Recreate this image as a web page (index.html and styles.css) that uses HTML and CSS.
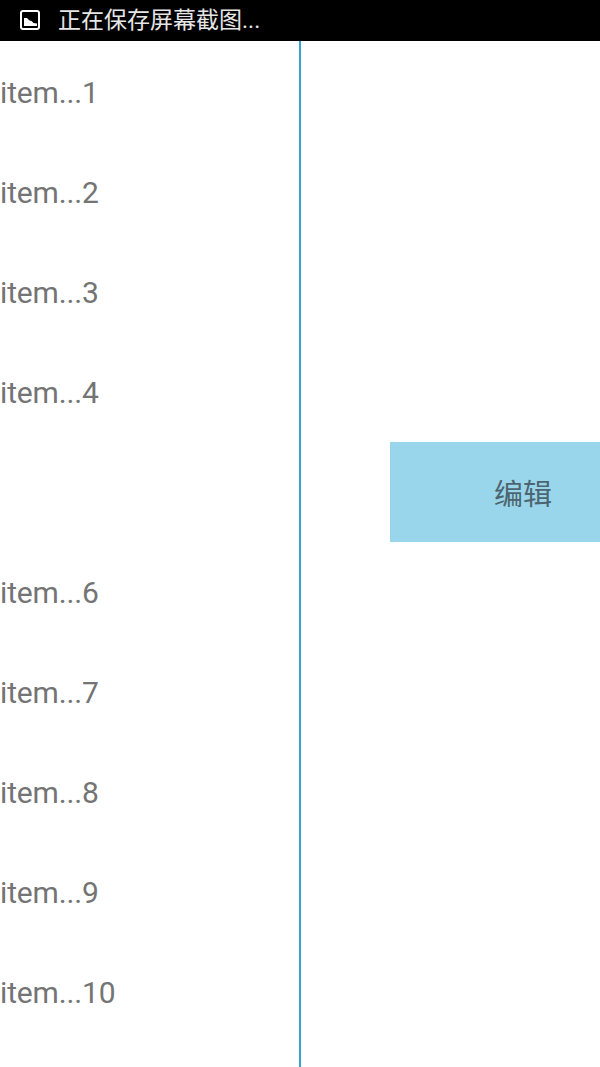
FILE: index.html
```html
<!DOCTYPE html>
<html lang="en">
<head>
    <meta charset="UTF-8">
    <meta name="viewport" content="width=device-width, initial-scale=1.0">
    <title>List</title>
    <link rel="stylesheet" href="styles.css">
</head>
<body>

    <div class="status-bar">
        <svg class="status-icon" width="20" height="20" viewBox="0 0 20 20">
            <rect x="1" y="1" width="18" height="18" rx="2" fill="none" stroke="#fff" stroke-width="2"/>
            <path d="M4 16 V8 H7 L9.5 10.5 L11.5 11 L13.5 13 L17 13.5 V16 Z" fill="#fff"/>
        </svg>
        <span class="status-text">正在保存屏幕截图...</span>
    </div>

    <div class="content">
        <div class="list">
            <div class="item">item...1</div>
            <div class="item">item...2</div>
            <div class="item">item...3</div>
            <div class="item">item...4</div>
            <div class="item"></div>
            <div class="item">item...6</div>
            <div class="item">item...7</div>
            <div class="item">item...8</div>
            <div class="item">item...9</div>
            <div class="item">item...10</div>
        </div>
        <div class="side">
            <div class="edit-btn">编辑</div>
        </div>
    </div>

</body>
</html>
```

FILE: styles.css
```css
html, body {
    height: 100%;
}

body {
    margin: 0;
    display: flex;
    flex-direction: column;
    overflow: hidden;
    background-color: #fff;
    font-family: Roboto, "Noto Sans CJK SC", sans-serif;
}

.status-bar {
    display: flex;
    align-items: center;
    flex-shrink: 0;
    height: 41px;
    padding-left: 20px;
    background-color: #000;
}

.status-icon {
    flex-shrink: 0;
    margin-bottom: 1px;
}

.status-text {
    margin-left: 18px;
    font-size: 23px;
    line-height: 30px;
    color: #e6e6e6;
}

.content {
    display: flex;
    flex: 1;
    min-height: 0;
}

.list {
    width: 299px;
    padding-top: 1px;
    border-right: 2px solid #33a5d8;
}

.item {
    display: flex;
    align-items: center;
    height: 100px;
    font-size: 30px;
    letter-spacing: -0.15px;
    color: #747474;
}

.side {
    flex: 1;
    padding-top: 401px;
}

.edit-btn {
    width: 106px;
    height: 97px;
    margin-left: 89px;
    padding-left: 104px;
    padding-top: 3px;
    line-height: 100px;
    font-size: 29px;
    color: #4d6570;
    background-color: #99d6eb;
}
```
